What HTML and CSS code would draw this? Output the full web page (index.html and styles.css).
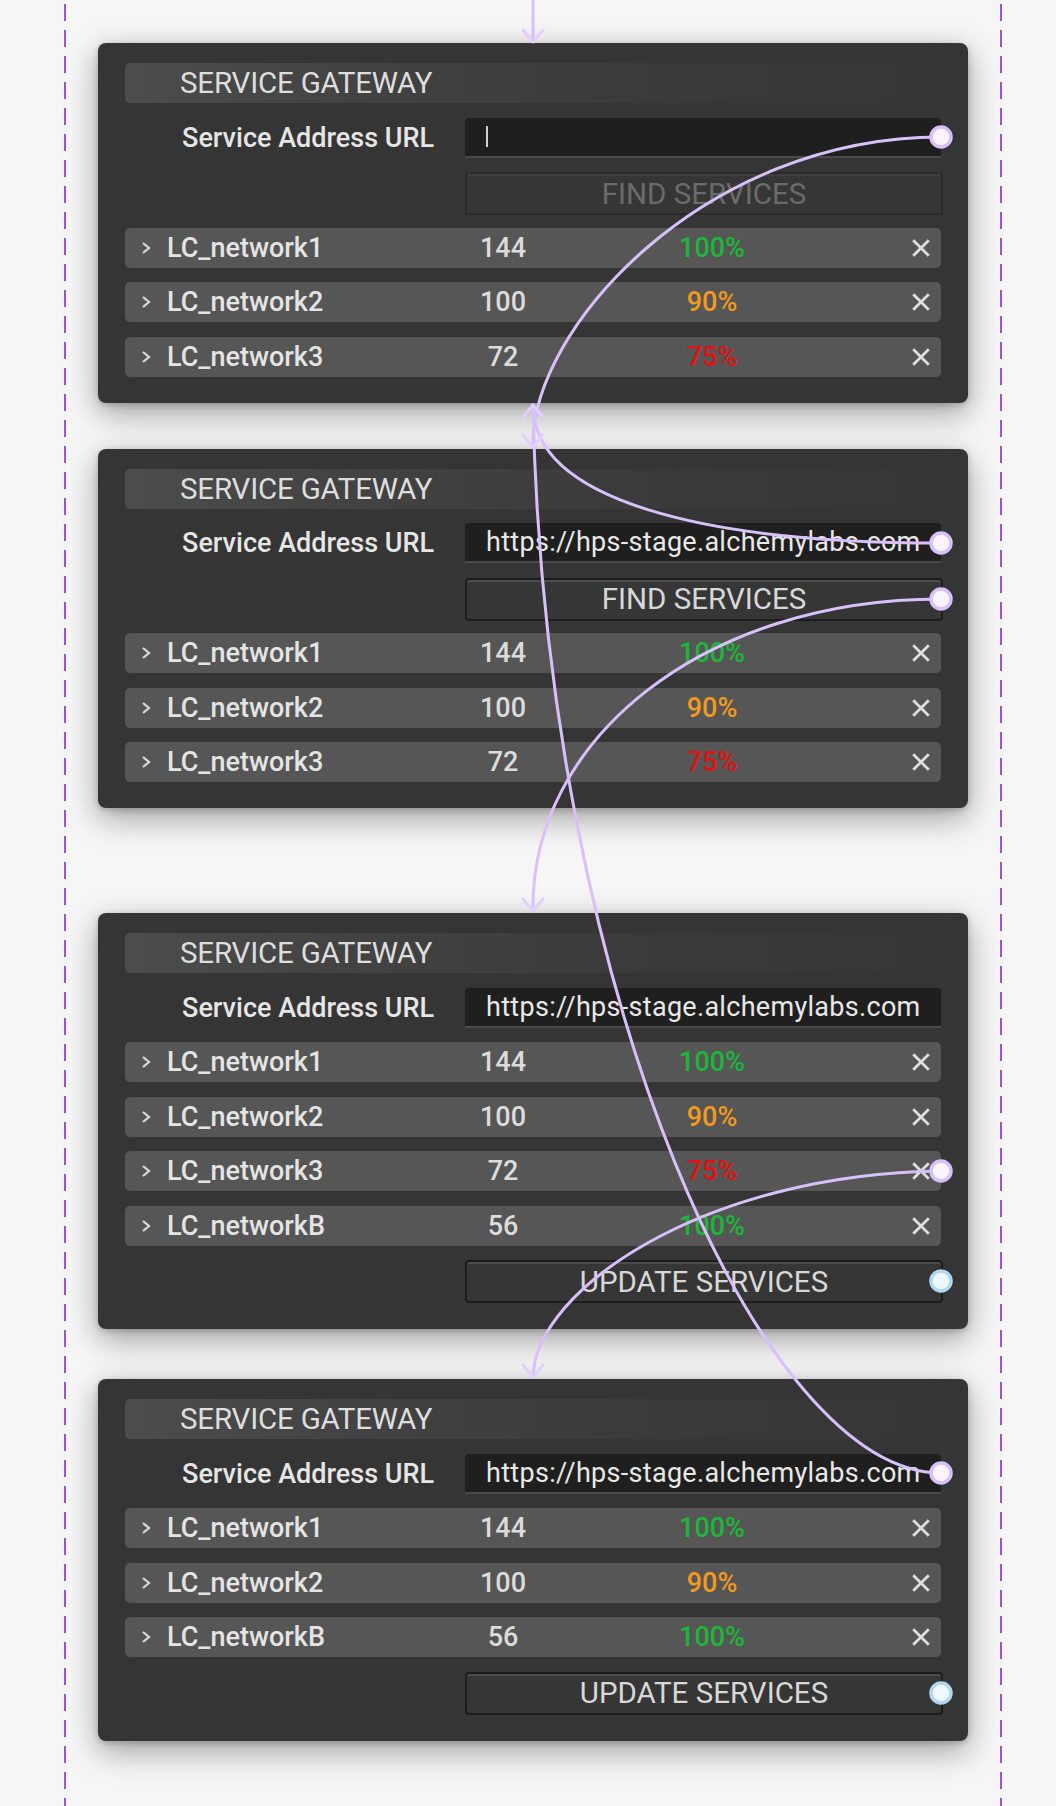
FILE: index.html
```html
<!DOCTYPE html>
<html lang="en">
<head>
    <meta charset="UTF-8">
    <title>Service Gateway</title>
    <link rel="stylesheet" href="styles.css">
</head>
<body>
<div class="stage">

    <!-- node 1: empty url -->
    <div class="node">
        <div class="node-title">SERVICE GATEWAY</div>
        <div class="field">
            <span class="field-label">Service Address URL</span>
            <div class="field-input"><span class="caret"></span></div>
        </div>
        <button class="btn find" disabled>FIND SERVICES</button>
        <div class="net">
            <svg class="chev" viewBox="0 0 10 14"><polyline points="2,2 8,7 2,12"/></svg>
            <span class="net-name">LC_network1</span>
            <span class="net-count">144</span>
            <span class="net-pct ok">100%</span>
            <svg class="close" viewBox="0 0 18 18"><path d="M2 2L16 16M16 2L2 16"/></svg>
        </div>
        <div class="net">
            <svg class="chev" viewBox="0 0 10 14"><polyline points="2,2 8,7 2,12"/></svg>
            <span class="net-name">LC_network2</span>
            <span class="net-count">100</span>
            <span class="net-pct warn">90%</span>
            <svg class="close" viewBox="0 0 18 18"><path d="M2 2L16 16M16 2L2 16"/></svg>
        </div>
        <div class="net">
            <svg class="chev" viewBox="0 0 10 14"><polyline points="2,2 8,7 2,12"/></svg>
            <span class="net-name">LC_network3</span>
            <span class="net-count">72</span>
            <span class="net-pct bad">75%</span>
            <svg class="close" viewBox="0 0 18 18"><path d="M2 2L16 16M16 2L2 16"/></svg>
        </div>
    </div>

    <!-- node 2: url filled -->
    <div class="node">
        <div class="node-title">SERVICE GATEWAY</div>
        <div class="field">
            <span class="field-label">Service Address URL</span>
            <div class="field-input">https://hps-stage.alchemylabs.com</div>
        </div>
        <button class="btn find">FIND SERVICES</button>
        <div class="net">
            <svg class="chev" viewBox="0 0 10 14"><polyline points="2,2 8,7 2,12"/></svg>
            <span class="net-name">LC_network1</span>
            <span class="net-count">144</span>
            <span class="net-pct ok">100%</span>
            <svg class="close" viewBox="0 0 18 18"><path d="M2 2L16 16M16 2L2 16"/></svg>
        </div>
        <div class="net">
            <svg class="chev" viewBox="0 0 10 14"><polyline points="2,2 8,7 2,12"/></svg>
            <span class="net-name">LC_network2</span>
            <span class="net-count">100</span>
            <span class="net-pct warn">90%</span>
            <svg class="close" viewBox="0 0 18 18"><path d="M2 2L16 16M16 2L2 16"/></svg>
        </div>
        <div class="net">
            <svg class="chev" viewBox="0 0 10 14"><polyline points="2,2 8,7 2,12"/></svg>
            <span class="net-name">LC_network3</span>
            <span class="net-count">72</span>
            <span class="net-pct bad">75%</span>
            <svg class="close" viewBox="0 0 18 18"><path d="M2 2L16 16M16 2L2 16"/></svg>
        </div>
    </div>

    <!-- node 3: services found -->
    <div class="node far">
        <div class="node-title">SERVICE GATEWAY</div>
        <div class="field">
            <span class="field-label">Service Address URL</span>
            <div class="field-input">https://hps-stage.alchemylabs.com</div>
        </div>
        <div class="net">
            <svg class="chev" viewBox="0 0 10 14"><polyline points="2,2 8,7 2,12"/></svg>
            <span class="net-name">LC_network1</span>
            <span class="net-count">144</span>
            <span class="net-pct ok">100%</span>
            <svg class="close" viewBox="0 0 18 18"><path d="M2 2L16 16M16 2L2 16"/></svg>
        </div>
        <div class="net">
            <svg class="chev" viewBox="0 0 10 14"><polyline points="2,2 8,7 2,12"/></svg>
            <span class="net-name">LC_network2</span>
            <span class="net-count">100</span>
            <span class="net-pct warn">90%</span>
            <svg class="close" viewBox="0 0 18 18"><path d="M2 2L16 16M16 2L2 16"/></svg>
        </div>
        <div class="net">
            <svg class="chev" viewBox="0 0 10 14"><polyline points="2,2 8,7 2,12"/></svg>
            <span class="net-name">LC_network3</span>
            <span class="net-count">72</span>
            <span class="net-pct bad">75%</span>
            <svg class="close" viewBox="0 0 18 18"><path d="M2 2L16 16M16 2L2 16"/></svg>
        </div>
        <div class="net">
            <svg class="chev" viewBox="0 0 10 14"><polyline points="2,2 8,7 2,12"/></svg>
            <span class="net-name">LC_networkB</span>
            <span class="net-count">56</span>
            <span class="net-pct ok">100%</span>
            <svg class="close" viewBox="0 0 18 18"><path d="M2 2L16 16M16 2L2 16"/></svg>
        </div>
        <button class="btn">UPDATE SERVICES</button>
    </div>

    <!-- node 4: after update -->
    <div class="node near">
        <div class="node-title">SERVICE GATEWAY</div>
        <div class="field">
            <span class="field-label">Service Address URL</span>
            <div class="field-input">https://hps-stage.alchemylabs.com</div>
        </div>
        <div class="net">
            <svg class="chev" viewBox="0 0 10 14"><polyline points="2,2 8,7 2,12"/></svg>
            <span class="net-name">LC_network1</span>
            <span class="net-count">144</span>
            <span class="net-pct ok">100%</span>
            <svg class="close" viewBox="0 0 18 18"><path d="M2 2L16 16M16 2L2 16"/></svg>
        </div>
        <div class="net">
            <svg class="chev" viewBox="0 0 10 14"><polyline points="2,2 8,7 2,12"/></svg>
            <span class="net-name">LC_network2</span>
            <span class="net-count">100</span>
            <span class="net-pct warn">90%</span>
            <svg class="close" viewBox="0 0 18 18"><path d="M2 2L16 16M16 2L2 16"/></svg>
        </div>
        <div class="net">
            <svg class="chev" viewBox="0 0 10 14"><polyline points="2,2 8,7 2,12"/></svg>
            <span class="net-name">LC_networkB</span>
            <span class="net-count">56</span>
            <span class="net-pct ok">100%</span>
            <svg class="close" viewBox="0 0 18 18"><path d="M2 2L16 16M16 2L2 16"/></svg>
        </div>
        <button class="btn">UPDATE SERVICES</button>
    </div>

</div>

<!-- connections between the nodes -->
<svg class="wires" width="1056" height="1806" viewBox="0 0 1056 1806">
    <g class="wire">
        <path d="M533,0 L533,41"/>
        <path d="M941,137 C703,137 530,330 533,446"/>
        <path d="M941,543 C703,543 533,500 533,405"/>
        <path d="M941,1473 C763,1473 545,1000 533,405"/>
        <path d="M941,599 C703,599 530,740 533,911"/>
        <path d="M941,1171 C703,1174 535,1290 533,1377"/>
    </g>
    <g class="wire arrow">
        <path d="M523,30 L533,42 L543,30"/>
        <path d="M523,435 L533,447 L543,435"/>
        <path d="M523,417 L533,405 L543,417"/>
        <path d="M523,899 L533,911 L543,899"/>
        <path d="M523,1365 L533,1377 L543,1365"/>
    </g>
    <g class="port">
        <circle cx="941" cy="137" r="10"/>
        <circle cx="941" cy="543" r="10"/>
        <circle cx="941" cy="599" r="10"/>
        <circle cx="941" cy="1171" r="10"/>
        <circle cx="941" cy="1473" r="10"/>
    </g>
    <g class="port blue">
        <circle cx="941" cy="1281" r="10"/>
        <circle cx="941" cy="1693" r="10"/>
    </g>
</svg>
</body>
</html>
```

FILE: styles.css
```css
* {
    margin: 0;
    padding: 0;
    box-sizing: border-box;
}

body {
    position: relative;
    background: #f6f6f6;
    font-family: Roboto, "Liberation Sans", sans-serif;
    color: #e2e2e2;
}

/* column with the two dashed guides */
.stage {
    margin-left: 64px;
    width: 938px;
    min-height: 1806px;
    padding: 43px 34px 0 34px;
    display: flex;
    flex-direction: column;
    background-image:
        repeating-linear-gradient(to bottom, transparent 0 4px, #9d52e4 4px 21px, transparent 21px 26px),
        repeating-linear-gradient(to bottom, transparent 0 4px, #9d52e4 4px 21px, transparent 21px 26px);
    background-size: 2px 100%;
    background-position: left top, right top;
    background-repeat: no-repeat;
}

.node {
    background: #353535;
    border-radius: 8px;
    padding: 20px 27px 26px 27px;
    display: flex;
    flex-direction: column;
    gap: 14.5px;
    box-shadow: 0 10px 32px rgba(0, 0, 0, 0.36), 0 2px 6px rgba(0, 0, 0, 0.2);
}

.node + .node {
    margin-top: 46px;
}

.node.far {
    margin-top: 105px;
}

.node.near {
    margin-top: 50px;
}

.node-title {
    height: 40px;
    padding-left: 55px;
    display: flex;
    align-items: center;
    border-radius: 5px;
    background: linear-gradient(90deg, #4c4c4c 0%, #424242 30%, #3a3a3a 65%, #363636 100%);
    font-size: 29.5px;
    letter-spacing: -0.2px;
    color: #dedede;
}

.field {
    display: grid;
    grid-template-columns: 1fr 476px;
    align-items: center;
    height: 40px;
}

.field-label {
    text-align: right;
    padding-right: 31px;
    font-size: 27px;
    font-weight: 500;
    color: #e6e6e6;
}

.field-input {
    height: 40px;
    display: flex;
    align-items: center;
    padding-left: 21px;
    background: #1f1f1f;
    border-bottom: 2px solid #4a4a4a;
    border-radius: 4px 4px 0 0;
    font-size: 27px;
    letter-spacing: 0.3px;
    color: #e8e8e8;
    white-space: nowrap;
    overflow: hidden;
}

.caret {
    width: 2px;
    height: 21px;
    background: #cfcfcf;
}

.btn {
    align-self: flex-end;
    width: 478px;
    height: 43px;
    margin-right: -2px;
    background: #363636;
    border: 2px solid #1c1c1c;
    border-radius: 4px;
    box-shadow: inset 0 2px 0 #4c4c4c;
    font-family: Roboto, "Liberation Sans", sans-serif;
    font-size: 29.5px;
    color: #d8d8d8;
}

.btn.find {
    margin-bottom: -2px;
}

.btn:disabled {
    color: #6b6b6b;
    border-color: #2a2a2a;
    box-shadow: inset 0 2px 0 #3f3f3f;
}

.net {
    height: 40px;
    display: grid;
    grid-template-columns: 26px 266px 140px 278px 1fr;
    align-items: center;
    padding: 0 10px 0 16px;
    background: #565656;
    border-radius: 5px;
    font-size: 27px;
    font-weight: 500;
}

.chev {
    width: 10px;
    height: 14px;
}

.chev polyline {
    fill: none;
    stroke: #dadada;
    stroke-width: 2.2;
}

.net-name {
    color: #e4e4e4;
}

.net-count {
    text-align: center;
    color: #dcdcdc;
}

.net-pct {
    text-align: center;
}

.ok {
    color: #1cb63a;
}

.warn {
    color: #f29a1d;
}

.bad {
    color: #e01212;
}

.close {
    justify-self: end;
    width: 20px;
    height: 20px;
}

.close path {
    stroke: #dedede;
    stroke-width: 2.5;
}

/* wires overlay */
.wires {
    position: absolute;
    top: 0;
    left: 0;
    pointer-events: none;
}

.wire path {
    fill: none;
    stroke: #d8c0fa;
    stroke-width: 3;
    stroke-linecap: round;
    stroke-linejoin: round;
}

.wire.arrow path {
    stroke: #e2d0fc;
}

.port circle {
    fill: #f9f4ff;
    stroke: #d8c0fa;
    stroke-width: 3.5;
}

.port.blue circle {
    fill: #eef8ff;
    stroke: #b0d8f5;
}
```
